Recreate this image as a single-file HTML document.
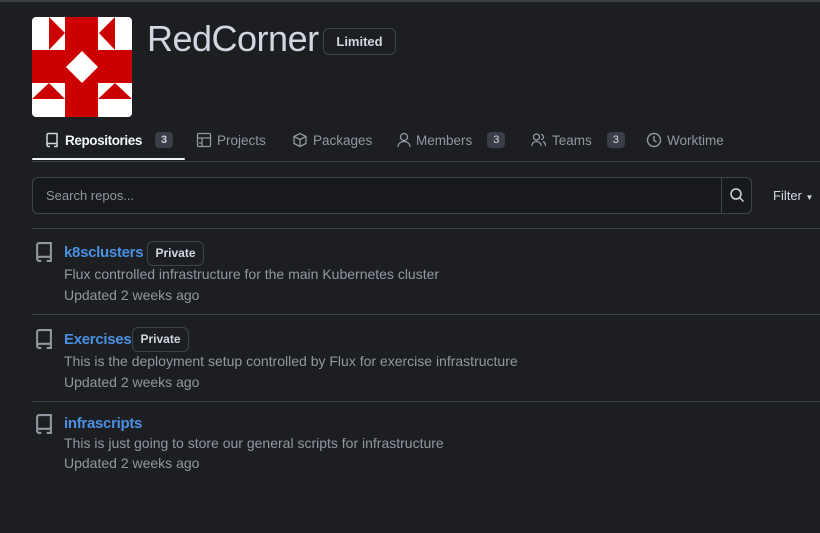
<!DOCTYPE html>
<html><head><style>
body{margin:0;width:820px;height:533px;background:#1c1e22;font-family:"Liberation Sans",sans-serif;color:#9198a1;overflow:hidden;position:relative;border-top:2px solid #3a3e45;box-sizing:border-box}
.a{position:absolute}
.badge{border:1px solid #3d444d;border-radius:6px;color:#d1d7e0;font-weight:bold;font-size:12px;text-align:center;box-sizing:border-box}
.cnt{background:#3a3f47;color:#d1d7e0;border-radius:4px;font-size:11px;padding:2px 6px;margin-left:8px}
.tab{position:absolute;top:130px;font-size:13.5px;color:#9198a1;display:flex;align-items:center;gap:5px}
.line{position:absolute;left:32px;right:0;height:1px;background:#3a3e45}
.name{font-size:15px;color:#4a90e2;font-weight:bold;letter-spacing:-0.3px}
.desc{font-size:14px}
</style></head><body>
<svg class="a" style="left:32px;top:15px" width="100" height="100" viewBox="32 17 100 100">
<rect x="32" y="17" width="100" height="100" rx="4" fill="#fff"/>
<rect x="65" y="17" width="33" height="100" fill="#cc0000"/>
<rect x="32" y="50" width="100" height="33" fill="#cc0000"/>
<polygon points="82,51 98,67 82,83 66,67" fill="#fff"/>
<polygon points="49,17 65,33 49,50" fill="#cc0000"/>
<polygon points="115,17 99,33 115,50" fill="#cc0000"/>
<polygon points="32,99 49,83 65,99" fill="#cc0000"/>
<polygon points="98,99 115,83 132,99" fill="#cc0000"/>
</svg>
<div class="a" style="left:147px;top:16px;font-size:36px;color:#d1d7e0;letter-spacing:-0.5px">RedCorner</div>
<div class="a badge" style="left:323px;top:26px;width:73px;height:27px;line-height:25px;font-size:13px">Limited</div>

<div class="tab" style="left:44px;color:#f0f6fc;font-weight:bold"><svg width="16" height="16" viewBox="0 0 16 16" fill="none" stroke="#d1d7e0" stroke-width="1.5"><path d="M3 13V3a1.5 1.5 0 0 1 1.5-1.5H13v10H4.5A1.5 1.5 0 0 0 3 13a1.5 1.5 0 0 0 1.5 1.5H6M10 14.5h3v-3"/></svg><span style="letter-spacing:-0.4px">Repositories</span><span class="cnt">3</span></div>
<div class="tab" style="left:196px"><svg width="16" height="16" viewBox="0 0 16 16" fill="none" stroke="#9198a1" stroke-width="1.3"><rect x="1.5" y="1.5" width="13" height="13" rx="1"/><path d="M1.5 6h13M6 6v8.5M3 11h3"/></svg>Projects</div>
<div class="tab" style="left:292px"><svg width="16" height="16" viewBox="0 0 16 16" fill="none" stroke="#9198a1" stroke-width="1.3"><path d="M8 1.5l6 3v7l-6 3-6-3v-7zM2 4.5l6 3 6-3M8 7.5v7"/></svg>Packages</div>
<div class="tab" style="left:397px"><svg width="14" height="16" viewBox="0 0 14 16" fill="none" stroke="#9198a1" stroke-width="1.3"><circle cx="7" cy="5" r="3.5"/><path d="M1 15c0-3.5 2.7-5.5 6-5.5s6 2 6 5.5"/></svg>Members<span class="cnt" style="margin-left:10px">3</span></div>
<div class="tab" style="left:531px"><svg width="16" height="16" viewBox="0 0 16 16" fill="none" stroke="#9198a1" stroke-width="1.3"><circle cx="5.5" cy="5" r="3"/><path d="M1 14c0-3 2-4.5 4.5-4.5S10 11 10 14M10 2.5a2.5 2.5 0 0 1 0 5M12 9.5c1.5.7 2.5 2 2.5 4.5"/></svg>Teams<span class="cnt" style="margin-left:10px">3</span></div>
<div class="tab" style="left:646px"><svg width="16" height="16" viewBox="0 0 16 16" fill="none" stroke="#9198a1" stroke-width="1.4"><circle cx="8" cy="8" r="6.5"/><path d="M8 4v4.5l2.5 1.5"/></svg>Worktime</div>
<div class="a" style="left:32px;top:156px;width:153px;height:2px;background:#f0f6fc;border-radius:1px"></div>
<div class="line" style="top:159px"></div>

<div class="a" style="left:32px;top:175px;width:720px;height:37px;border:1px solid #3d444d;border-radius:6px;box-sizing:border-box;background:#17191c"></div>
<div class="a" style="left:721px;top:175px;width:1px;height:37px;background:#3d444d"></div>
<div class="a" style="left:46px;top:186px;font-size:13px;color:#9198a1">Search repos...</div>
<svg class="a" style="left:729px;top:185px" width="16" height="16" viewBox="0 0 16 16" fill="none" stroke="#d1d7e0" stroke-width="1.5"><circle cx="7" cy="7" r="5"/><path d="M10.5 10.5l4 4"/></svg>
<div class="a" style="left:773px;top:186px;font-size:13px;color:#d1d7e0">Filter <span style="font-size:8px">▼</span></div>

<div class="line" style="top:226px"></div>
<div class="line" style="top:312px"></div>
<div class="line" style="top:399px"></div>

<svg class="a" style="left:33px;top:237px" width="22" height="26" viewBox="0 0 16 16" fill="none" stroke="#9198a1" stroke-width="1.5"><path d="M3 13V3a1.5 1.5 0 0 1 1.5-1.5H13v10H4.5A1.5 1.5 0 0 0 3 13a1.5 1.5 0 0 0 1.5 1.5H6M10 14.5h3v-3"/></svg>
<div class="a name" style="left:64px;top:242px">k8sclusters</div>
<div class="a badge" style="left:147px;top:239px;width:57px;height:25px;line-height:23px">Private</div>
<div class="a desc" style="left:64px;top:264px">Flux controlled infrastructure for the main Kubernetes cluster</div>
<div class="a desc" style="left:64px;top:285px">Updated 2 weeks ago</div>

<svg class="a" style="left:33px;top:324px" width="22" height="26" viewBox="0 0 16 16" fill="none" stroke="#9198a1" stroke-width="1.5"><path d="M3 13V3a1.5 1.5 0 0 1 1.5-1.5H13v10H4.5A1.5 1.5 0 0 0 3 13a1.5 1.5 0 0 0 1.5 1.5H6M10 14.5h3v-3"/></svg>
<div class="a name" style="left:64px;top:329px">Exercises</div>
<div class="a badge" style="left:132px;top:325px;width:57px;height:25px;line-height:23px">Private</div>
<div class="a desc" style="left:64px;top:351px">This is the deployment setup controlled by Flux for exercise infrastructure</div>
<div class="a desc" style="left:64px;top:372px">Updated 2 weeks ago</div>

<svg class="a" style="left:33px;top:409px" width="22" height="26" viewBox="0 0 16 16" fill="none" stroke="#9198a1" stroke-width="1.5"><path d="M3 13V3a1.5 1.5 0 0 1 1.5-1.5H13v10H4.5A1.5 1.5 0 0 0 3 13a1.5 1.5 0 0 0 1.5 1.5H6M10 14.5h3v-3"/></svg>
<div class="a name" style="left:64px;top:413px">infrascripts</div>
<div class="a desc" style="left:64px;top:433px">This is just going to store our general scripts for infrastructure</div>
<div class="a desc" style="left:64px;top:453px">Updated 2 weeks ago</div>
</body></html>
